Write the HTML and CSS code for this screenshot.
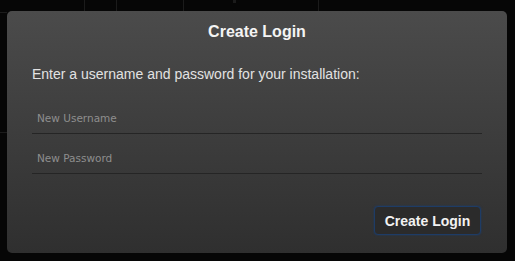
FILE: index.html
```html
<!DOCTYPE html>
<html lang="en">
<head>
  <meta charset="UTF-8">
  <meta name="viewport" content="width=device-width, initial-scale=1.0">
  <title>Create Login</title>
  <link rel="stylesheet" href="styles.css">
</head>
<body>
  <div class="backdrop">
    <span class="vline" style="left: 84px;"></span>
    <span class="vline" style="left: 116px;"></span>
    <span class="vline" style="left: 183px;"></span>
    <span class="vline" style="left: 318px;"></span>
    <span class="dot" style="left: 233px;"></span>
    <span class="hline" style="top: 12px;"></span>
    <span class="hline" style="top: 132px;"></span>
  </div>

  <div class="dialog">
    <h2>Create Login</h2>
    <p class="intro">Enter a username and password for your installation:</p>
    <input type="text" class="field" placeholder="New Username" autofocus>
    <input type="password" class="field" placeholder="New Password">
    <div class="actions">
      <button class="btn">Create Login</button>
    </div>
  </div>
</body>
</html>
```

FILE: styles.css
```css
body {
  margin: 0;
  padding: 11px 0 0 7px;
  background-color: #060606;
  font-family: 'Liberation Sans', Arial, sans-serif;
  height: 261px;
  box-sizing: border-box;
  overflow: hidden;
  position: relative;
}
.backdrop span {
  position: absolute;
  background-color: #1b1b1b;
}
.vline {
  top: 0;
  width: 1px;
  height: 11px;
}
.dot {
  top: 0;
  width: 3px;
  height: 3px;
}
.hline {
  left: 0;
  width: 7px;
  height: 1px;
}
.dialog {
  position: relative;
  width: 500px;
  height: 242px;
  box-sizing: border-box;
  padding: 11px 25px 18px 25px;
  border-radius: 5px;
  background: linear-gradient(#4b4b4b, #2f2f2f);
}
.dialog h2 {
  margin: 0;
  font-size: 16px;
  line-height: 20px;
  font-weight: bold;
  color: #f4f4f4;
  text-align: center;
}
.intro {
  margin: 23px 0 0 0;
  font-size: 14px;
  line-height: 18px;
  color: #e2e2e2;
}
.field {
  display: block;
  width: 450px;
  height: 31px;
  box-sizing: border-box;
  margin: 9px 0 0 0;
  padding: 0 0 0 5px;
  border: none;
  border-bottom: 1px solid #252525;
  background: transparent;
  font-family: 'DejaVu Sans', sans-serif;
  font-size: 10.5px;
  color: #ddd;
  caret-color: #e0e0e0;
  outline: none;
}
.field:first-of-type {
  margin-top: 20px;
}
.field::placeholder {
  color: #8e8e8e;
}
.actions {
  display: flex;
  justify-content: flex-end;
  margin-top: 32px;
  padding-right: 1px;
}
.btn {
  width: 107px;
  height: 29px;
  border-radius: 4px;
  border: 1px solid #1e3c66;
  box-shadow: 0 0 2px #1d3d6b;
  background-color: #2b2b2b;
  color: #f2f2f2;
  font-family: 'Liberation Sans', Arial, sans-serif;
  font-size: 14px;
  font-weight: bold;
  cursor: pointer;
}
```
